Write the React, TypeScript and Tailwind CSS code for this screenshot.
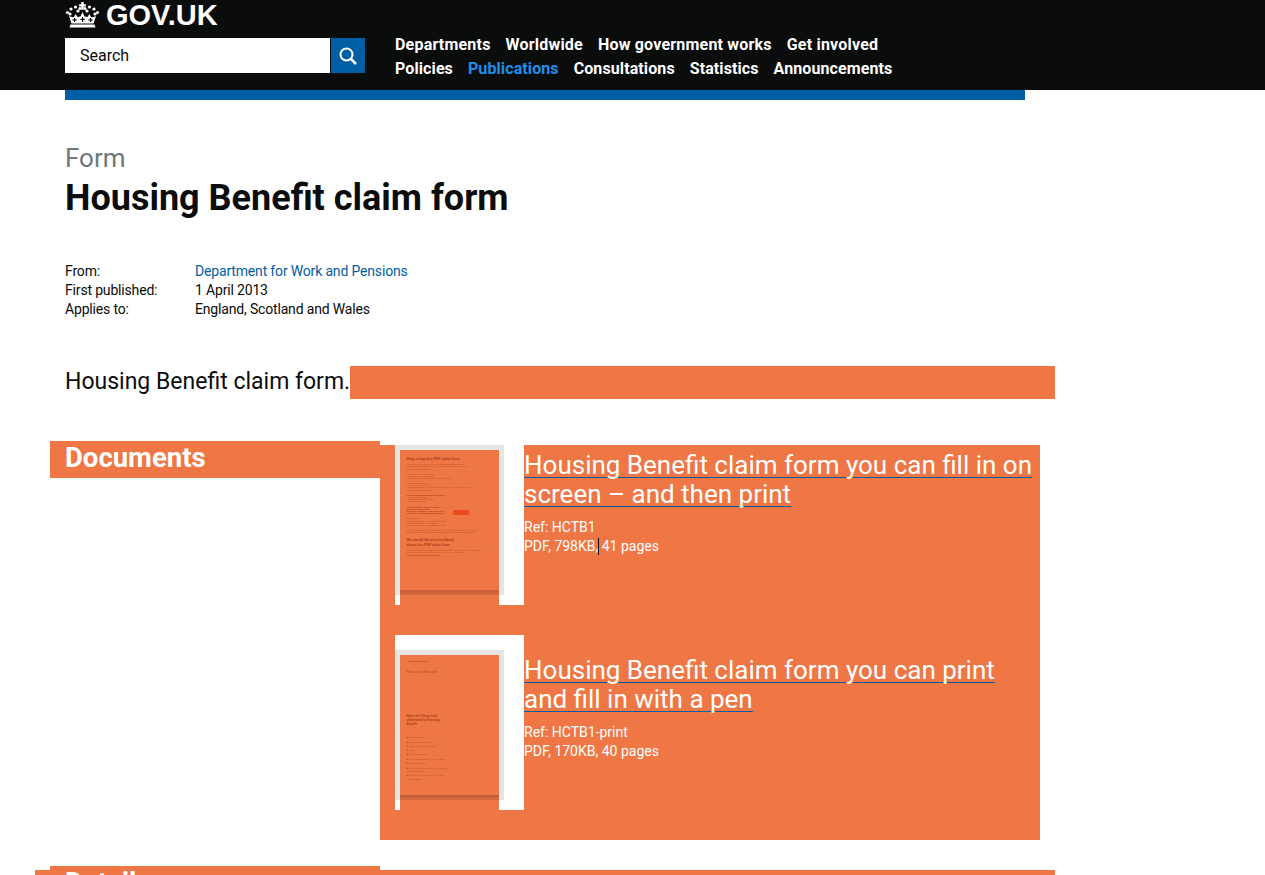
// GOV.UK publication page: header, document metadata and attachment list
const TOP_NAV = ["Departments", "Worldwide", "How government works", "Get involved"];
const SUB_NAV = ["Policies", "Publications", "Consultations", "Statistics", "Announcements"];

function Crown() {
  const dots = [
    [2.5, 10.5], [6, 7], [10.5, 5], [15, 6.5], [20, 6.5], [24.5, 5], [29, 7], [32.5, 10.5],
    [5, 12], [30, 12], [13, 9], [22, 9],
  ];
  return (
    <svg viewBox="0 0 35 26" className="h-[26px] w-[35px] shrink-0" fill="#fff">
      <path d="M16.3 0h2.4v2.2h2.2v2.2h-2.2v3.4h-2.4V4.4h-2.2V2.2h2.2z" />
      {dots.map(([x, y], i) => (
        <circle key={i} cx={x} cy={y} r="1.6" />
      ))}
      <path d="M4 14c2 1 3.500 1.500 5 1l1.500-3 2 3 3-.5 2-4.500 2 4.500 3 .5 2-3 1.500 3c1.500.5 3 0 5-1l-2.500 7.500h-22z" />
      <path d="M5.500 22.500h24l1 3h-26z" />
      <g fill="#0b0c0c">
        <rect x="9" y="16" width="1.200" height="4" />
        <rect x="7.500" y="17.300" width="4.200" height="1.200" />
        <rect x="17" y="15" width="1.200" height="5" />
        <rect x="15.400" y="16.800" width="4.400" height="1.200" />
        <rect x="25" y="16" width="1.200" height="4" />
        <rect x="23.500" y="17.300" width="4.200" height="1.200" />
      </g>
    </svg>
  );
}

function SearchIcon() {
  return (
    <svg viewBox="0 0 18 18" className="h-[18px] w-[18px]" fill="none" stroke="#fff">
      <circle cx="7.500" cy="7.500" r="6" strokeWidth="2" />
      <path d="M12 12l5 5" strokeWidth="2.500" />
    </svg>
  );
}

function SiteHeader() {
  return (
    <header className="h-[90px] bg-[#0b0c0c] pl-[65px]">
      <div className="flex h-[30px] items-start gap-[6px] pt-[2px]">
        <Crown />
        <span className="font-['Liberation_Sans',sans-serif] text-[29px] leading-[27px] font-bold text-white">GOV.UK</span>
      </div>
      <div className="mt-[8px] flex">
        <div className="flex h-[35px] w-[265px] items-center bg-white pl-[15px] text-[16px] text-[#0b0c0c]">Search</div>
        <div className="ml-px flex h-[35px] w-[34px] items-center justify-center bg-[#005ea5]">
          <SearchIcon />
        </div>
        <nav className="ml-[30px] -mt-[5px] text-[16px] leading-[24px] font-bold text-white">
          <div className="flex gap-[15px] tracking-[0.2px]">
            {TOP_NAV.map((n) => (
              <span key={n}>{n}</span>
            ))}
          </div>
          <div className="flex gap-[15px] tracking-[0.1px]">
            {SUB_NAV.map((n) => (
              <span key={n} className={n === "Publications" ? "text-[#1d8feb]" : ""}>
                {n}
              </span>
            ))}
          </div>
        </nav>
      </div>
    </header>
  );
}

type Line = { y: number; t: string; bold?: boolean; size?: number };

const THUMB_ONE: Line[] = [
  { y: 10, t: "Help using this PDF claim form", bold: true, size: 3.6 },
  { y: 15, t: "In this PDF form you can enter information and print the form" },
  { y: 17.300, t: "Before Benefit HCTB1 and Help. This means that you no longer" },
  { y: 19.600, t: "the form in your browser." },
  { y: 24.500, t: "The form will only work if you:" },
  { y: 26.800, t: "- install a free Adobe Reader" },
  { y: 29.100, t: "- open it in Adobe Reader and not in a browser" },
  { y: 33.800, t: "The form lets you print it:" },
  { y: 36.100, t: "- make sure you fill the form" },
  { y: 38.400, t: "- select and answer, for example, through an office or bank or a PC" },
  { y: 40.700, t: "- open and choose a printer" },
  { y: 45.500, t: "If you are having technical difficulties:", bold: true },
  { y: 47.800, t: "- check you are online" },
  { y: 50.100, t: "- Navigating through the form" },
  { y: 52.400, t: "- using Reader tools" },
  { y: 57.500, t: "If you still need Adobe Helpdesk", bold: true },
  { y: 59.800, t: "Phone: 0800 055 66 88", bold: true },
  { y: 62.100, t: "Minicom / Textphone: 0800 328 90 78", bold: true },
  { y: 64.400, t: "Email: pdf-helpdesk@dwp.gsi.gov.uk", bold: true },
  { y: 69.300, t: "Opening hours:" },
  { y: 71.600, t: "8am-6pm on Friday - Monday to Thursday" },
  { y: 73.900, t: "Weekends: 8am-6pm - Saturday" },
  { y: 76.200, t: "Closed on UK Public and Bank Holidays" },
  { y: 81, t: "For help and advice on the information you need to put on the form, or about" },
  { y: 83.300, t: "the benefit you want to claim, contact the office that deals with the benefit." },
  { y: 91, t: "We would like your feedback", bold: true, size: 3.5 },
  { y: 95.500, t: "about this PDF claim form", bold: true, size: 3.5 },
  { y: 101, t: "We would like your feedback about this PDF form. We will use any comments to" },
  { y: 103.300, t: "improve this and other forms. Please email your comments to:" },
  { y: 105.600, t: "forms-feedback@dwp.gsi.gov.uk", bold: true },
];

const THUMB_TWO: Line[] = [
  { y: 6.800, t: "HCTB1 notes 04/13", bold: true, size: 2.400 },
  { y: 17.500, t: "Housing Benefit", size: 4.400 },
  { y: 62, t: "Notes for filling in the", bold: true, size: 3 },
  { y: 66, t: "claim form for Housing", bold: true, size: 3 },
  { y: 70, t: "Benefit", bold: true, size: 3 },
  { y: 83, t: "■ About this form", size: 2.500 },
  { y: 87.500, t: "■ About Housing Benefit", size: 2.500 },
  { y: 91.700, t: "■ Local Housing Allowance", size: 2.500 },
  { y: 96, t: "■ Rent", size: 2.500 },
  { y: 100, t: "■ Filling in the form", size: 2.500 },
  { y: 104.500, t: "■ If you need help to fill in the form", size: 2.500 },
  { y: 109, t: "■ What to do next", size: 2.500 },
  { y: 113.500, t: "■ How your local council collects and", size: 2.500 },
  { y: 116.800, t: "   uses information", size: 2.500 },
  { y: 121, t: "■ Changes you must tell your local", size: 2.500 },
  { y: 124.800, t: "   council about", size: 2.500 },
];

function Thumbnail({ lines, stamp }: { lines: Line[]; stamp?: boolean }) {
  return (
    <svg viewBox="0 0 99 140" className="block h-[140px] w-[99px]">
      {stamp && <rect x="53" y="60" width="16" height="5" fill="#ec4a1c" />}
      {lines.map((l, i) => (
        <text
          key={i}
          x="6.500"
          y={l.y}
          fontFamily="'Liberation Sans', sans-serif"
          fontSize={l.size ?? 2.150}
          fontWeight={l.bold ? 700 : 400}
          fill={l.bold ? "#a83c18" : "#b8502a"}
        >
          {l.t}
        </text>
      ))}
    </svg>
  );
}

function Attachment({
  title,
  docRef,
  meta,
  lines,
  stamp,
  topGap,
  textGap,
}: {
  title: string;
  docRef: string;
  meta: React.ReactNode;
  lines: Line[];
  stamp?: boolean;
  topGap: string;
  textGap: string;
}) {
  return (
    <div className="flex">
      <div className="h-fit w-[129px] shrink-0 bg-white">
        <div className={topGap}>
          <div className="w-[109px] bg-[#e5e5e5] p-[5px] pb-0">
            <div className="bg-[#ef7645]">
              <Thumbnail lines={lines} stamp={stamp} />
            </div>
            <div className="h-[5px] bg-linear-to-b from-[#c25c36] to-[#d8693f]" />
          </div>
          <div className="ml-[5px] h-[10px] w-[99px] bg-[#ef7645]" />
        </div>
      </div>
      <div className={`w-[510px] shrink-0 ${textGap}`}>
        <h3 className="text-[26px] leading-[29px] text-white underline decoration-[#005ea5] decoration-1 underline-offset-[3px]">
          {title}
        </h3>
        <p className="mt-[9px] text-[14px] leading-[19px] text-white">{docRef}</p>
        <p className="text-[14px] leading-[19px] text-white">{meta}</p>
      </div>
    </div>
  );
}

export default function App() {
  return (
    <div className="h-[875px] overflow-hidden bg-white font-['Roboto',sans-serif] text-[#0b0c0c]">
      <SiteHeader />
      <div className="ml-[65px] h-[10px] w-[960px] bg-[#005ea5]" />

      <div className="mt-[43px] pl-[65px]">
        <p className="text-[26px] leading-[30px] text-[#6f777b]">Form</p>
        <h1 className="mt-[5px] text-[36px] leading-[40px] font-bold">Housing Benefit claim form</h1>
      </div>

      <dl className="mt-[44px] grid w-[600px] grid-cols-[130px_1fr] pl-[65px] text-[14px] leading-[19px] tracking-[-0.17px]">
        <dt>From:</dt>
        <dd className="text-[#005ea5]">Department for Work and Pensions</dd>
        <dt>First published:</dt>
        <dd>1 April 2013</dd>
        <dt>Applies to:</dt>
        <dd>England, Scotland and Wales</dd>
      </dl>

      <div className="mt-[47px] flex h-[33px] w-[1055px] items-center pl-[65px]">
        <p className="text-[23px]">Housing Benefit claim form.</p>
        <div className="h-[33px] flex-1 bg-[#ef7645]" />
      </div>

      <section className="mt-[42px] flex pl-[50px]">
        <h2 className="h-[37px] w-[330px] bg-[#ef7645] pl-[15px] text-[27.5px] leading-[33px] font-bold text-white">Documents</h2>
        <div className="mt-[4px] flex h-[395px] w-[660px] flex-col gap-[30px] bg-[#ef7645] pl-[15px]">
          <Attachment
            title="Housing Benefit claim form you can fill in on screen – and then print"
            docRef="Ref: HCTB1"
            topGap=""
            textGap="pt-[6px]"
            stamp
            lines={THUMB_ONE}
            meta={
              <>
                PDF, 798KB
                <span className="-mr-[3px] ml-[2px] inline-block h-[17px] w-px bg-[#0b0c0c] align-[-4px]" />, 41 pages
              </>
            }
          />
          <Attachment
            title="Housing Benefit claim form you can print and fill in with a pen"
            docRef="Ref: HCTB1-print"
            topGap="pt-[15px]"
            textGap="pt-[21px]"
            lines={THUMB_TWO}
            meta="PDF, 170KB, 40 pages"
          />
        </div>
      </section>

      <section className="mt-[30px] ml-[35px] h-[60px] w-[1020px] bg-[#ef7645] pl-[15px]">
        <h2 className="relative -top-[4px] h-[37px] w-[330px] bg-[#ef7645] pl-[15px] text-[27.5px] leading-[33px] font-bold text-white">Details</h2>
      </section>
    </div>
  );
}
